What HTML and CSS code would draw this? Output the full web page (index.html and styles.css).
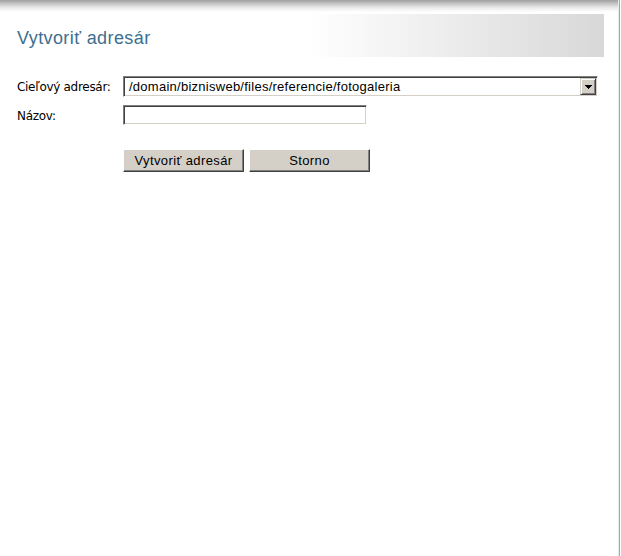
FILE: index.html
```html
<!DOCTYPE html>
<html lang="sk">
<head>
<meta charset="utf-8">
<title>Vytvoriť adresár</title>
<link rel="stylesheet" href="styles.css">
</head>
<body>
<div class="page">
  <div class="header">
    <h1 class="title">Vytvoriť adresár</h1>
  </div>
  <form class="form">
    <label class="label">Cieľový adresár:</label>
    <div class="select-box">
      <span class="select-text">/domain/biznisweb/files/referencie/fotogaleria</span>
      <span class="select-arrow"><svg width="7" height="4" viewBox="0 0 7 4"><path d="M0 0h7v1H0zM1 1h5v1H1zM2 2h3v1H2zM3 3h1v1H3z" fill="#000"/></svg></span>
    </div>
    <label class="label label-name">Názov:</label>
    <div class="field-row"><input class="text-input" type="text"></div>
    <div class="buttons">
      <button type="button" class="btn">Vytvoriť adresár</button>
      <button type="button" class="btn">Storno</button>
    </div>
  </form>
</div>
</body>
</html>
```
FILE: styles.css
```css
html, body {
  margin: 0;
  padding: 0;
  background: #fff;
}
.page {
  width: 619px;
  height: 556px;
  box-sizing: border-box;
  border-right: 1px solid #e8e8e8;
  box-shadow: 1px 0 0 #a8a8a8;
  background: linear-gradient(to bottom, #a0a0a0 0, #c8c8c8 4px, #ececec 8px, #ffffff 12px, #ffffff 100%);
  padding-top: 14px;
  overflow: hidden;
}
.header {
  margin-left: 10px;
  width: 594px;
  height: 43px;
  box-sizing: border-box;
  padding: 14px 0 0 7px;
  background: linear-gradient(to right, #ffffff 0, #ffffff 50%, #d8d8d8 100%);
}
.title {
  margin: 0;
  font-family: "Liberation Sans", Arial, sans-serif;
  font-weight: normal;
  font-size: 18px;
  letter-spacing: 0.4px;
  line-height: 20px;
  color: #3d6f8f;
}
.form {
  display: grid;
  grid-template-columns: 106px auto;
  margin: 19px 0 0 17px;
  align-items: center;
}
.label {
  font-family: "DejaVu Sans", Verdana, sans-serif;
  font-size: 12px;
  letter-spacing: -0.3px;
  color: #000;
}
.label-name {
  margin-top: 9px;
}
.select-box {
  width: 475px;
  height: 21px;
  box-sizing: border-box;
  border-style: solid;
  border-width: 1px;
  border-color: #808080 #ffffff #ffffff #808080;
  box-shadow: inset 1px 1px 0 #404040, inset -1px -1px 0 #d4d0c8;
  display: flex;
  align-items: center;
  padding: 0 1px 0 5px;
  background: #fff;
}
.select-text {
  flex: 1;
  font-family: "Liberation Sans", Arial, sans-serif;
  font-size: 13px;
  letter-spacing: 0.26px;
  color: #000;
}
.select-arrow {
  width: 16px;
  height: 17px;
  box-sizing: border-box;
  background: #d4d0c8;
  border-style: solid;
  border-width: 1px;
  border-color: #d4d0c8 #404040 #404040 #d4d0c8;
  box-shadow: inset 1px 1px 0 #ffffff, inset -1px -1px 0 #808080;
  display: flex;
  align-items: center;
  justify-content: center;
}
.field-row {
  margin-top: 8px;
  display: flex;
}
.text-input {
  width: 244px;
  height: 20px;
  box-sizing: border-box;
  margin: 0;
  padding: 0 4px;
  border-style: solid;
  border-width: 1px;
  border-color: #808080 #ffffff #ffffff #808080;
  box-shadow: inset 1px 1px 0 #404040, inset -1px -1px 0 #d4d0c8;
  font-family: "Liberation Sans", Arial, sans-serif;
  font-size: 13px;
  outline: none;
}
.buttons {
  grid-column: 2;
  display: flex;
  gap: 5px;
  margin-top: 24px;
}
.btn {
  width: 121px;
  height: 23px;
  box-sizing: border-box;
  margin: 0;
  padding: 0;
  background: #d4d0c8;
  border-style: solid;
  border-width: 1px;
  border-color: #ffffff #404040 #404040 #ffffff;
  box-shadow: inset -1px -1px 0 #808080;
  font-family: "Liberation Sans", Arial, sans-serif;
  font-size: 13px;
  letter-spacing: 0.4px;
  color: #000;
}
```
